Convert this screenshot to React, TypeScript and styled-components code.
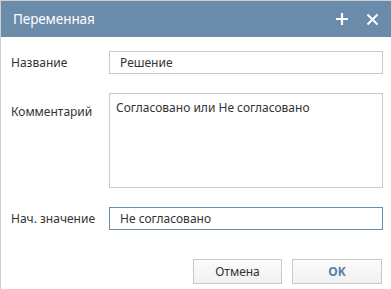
import React from "react";
import styled, { createGlobalStyle } from "styled-components";

const GlobalStyle = createGlobalStyle`
  html, body {
    margin: 0;
    padding: 0;
    background: #ffffff;
    font-family: "Noto Sans", "Open Sans", sans-serif;
  }
`;

const Dialog = styled.div`
  width: 391px;
  height: 289px;
  box-sizing: border-box;
  border-top: 1px solid #cfcfcf;
  border-left: 1px solid #cfcfcf;
  display: flex;
  flex-direction: column;
  overflow: hidden;
`;

const Header = styled.div`
  height: 36px;
  background: #6b8bab;
  display: flex;
  align-items: center;
  padding: 0 12px 0 12px;
  color: #ffffff;
`;

const Title = styled.div`
  flex: 1;
  font-size: 13.5px;
  letter-spacing: -0.1px;
`;

const HeaderButton = styled.button`
  background: none;
  border: none;
  padding: 0;
  width: 14px;
  height: 14px;
  margin-left: 16px;
  display: flex;
  align-items: center;
  justify-content: center;
  cursor: pointer;
`;

const Body = styled.div`
  display: flex;
  flex-direction: column;
  padding: 14px 8px 0 10px;
  gap: 19px;
`;

const Row = styled.div<{ $top?: boolean }>`
  display: flex;
  align-items: ${(p) => (p.$top ? "flex-start" : "center")};
`;

const Label = styled.div<{ $offset?: number }>`
  width: 98px;
  flex-shrink: 0;
  font-size: 12px;
  color: #333333;
  padding-top: ${(p) => p.$offset ?? 0}px;
`;

const Field = styled.div<{ $focused?: boolean }>`
  flex: 1;
  height: 23px;
  box-sizing: border-box;
  border: 1px solid ${(p) => (p.$focused ? "#6b8bab" : "#c9c9c9")};
  padding: 0 10px;
  display: flex;
  align-items: center;
  font-size: 12px;
  color: #333333;
  background: #ffffff;
`;

const Area = styled.div`
  flex: 1;
  height: 95px;
  box-sizing: border-box;
  border: 1px solid #c9c9c9;
  padding: 5px 6px;
  font-size: 12px;
  color: #333333;
`;

const Footer = styled.div`
  display: flex;
  justify-content: flex-end;
  gap: 10px;
  padding: 29px 9px 0 0;
`;

const Button = styled.button<{ $primary?: boolean }>`
  width: ${(p) => (p.$primary ? 90 : 89)}px;
  height: 25px;
  box-sizing: border-box;
  border: 1px solid #c9c9c9;
  background: linear-gradient(#fbfbfb, #f1f1f1);
  font-family: "Noto Sans", "Open Sans", sans-serif;
  font-size: 12px;
  font-weight: ${(p) => (p.$primary ? 700 : 400)};
  color: ${(p) => (p.$primary ? "#5b80a5" : "#333333")};
  cursor: pointer;
  padding: 0;
`;

export default function App() {
  return (
    <>
      <GlobalStyle />
      <Dialog>
        <Header>
          <Title>Переменная</Title>
          <HeaderButton aria-label="Добавить">
            <svg width="14" height="14" viewBox="0 0 14 14">
              <path d="M7 1v12M1 7h12" stroke="#fff" strokeWidth="2.2" />
            </svg>
          </HeaderButton>
          <HeaderButton aria-label="Закрыть">
            <svg width="13" height="13" viewBox="0 0 13 13">
              <path d="M1.5 1.5l10 10M11.5 1.5l-10 10" stroke="#fff" strokeWidth="2" />
            </svg>
          </HeaderButton>
        </Header>
        <Body>
          <Row>
            <Label>Название</Label>
            <Field>Решение</Field>
          </Row>
          <Row $top>
            <Label $offset={10}>Комментарий</Label>
            <Area>Согласовано или Не согласовано</Area>
          </Row>
          <Row>
            <Label>Нач. значение</Label>
            <Field $focused>Не согласовано</Field>
          </Row>
        </Body>
        <Footer>
          <Button>Отмена</Button>
          <Button $primary>OK</Button>
        </Footer>
      </Dialog>
    </>
  );
}
